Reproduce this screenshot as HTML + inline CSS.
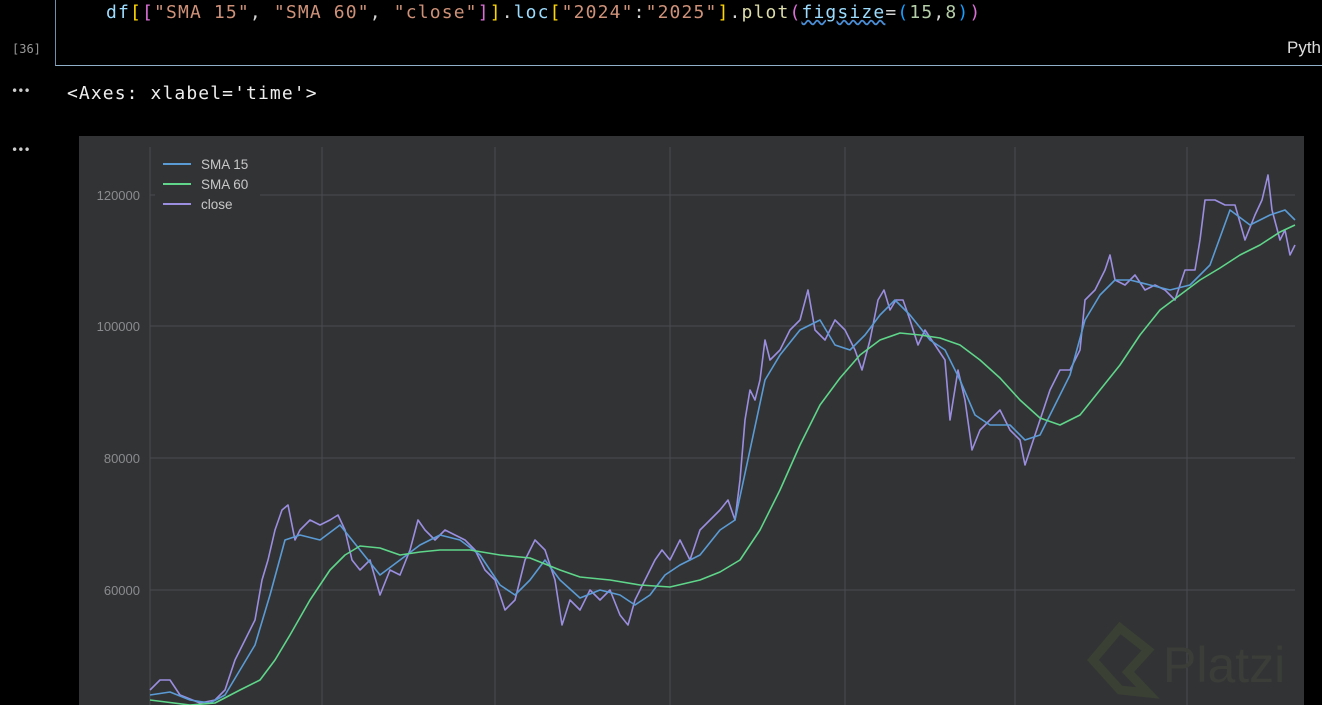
<!DOCTYPE html>
<html><head><style>
body{margin:0;width:1322px;height:705px;background:#000;overflow:hidden;position:relative;font-family:"DejaVu Sans Mono","Liberation Mono",monospace}
.a{position:absolute;white-space:pre}
</style></head><body>
<div class="a" style="left:55px;top:0;width:1267px;height:65px;border-left:1px solid #6f8fab;border-bottom:1px solid #8fb0c8"></div>
<div class="a" style="left:106px;top:2px;font-size:18px;letter-spacing:1.15px;color:#9cdcfe"><span style="color:#9cdcfe">df</span><span style="color:#ffd700">[</span><span style="color:#da70d6">[</span><span style="color:#ce9178">"SMA 15"</span><span style="color:#d4d4d4">, </span><span style="color:#ce9178">"SMA 60"</span><span style="color:#d4d4d4">, </span><span style="color:#ce9178">"close"</span><span style="color:#da70d6">]</span><span style="color:#ffd700">]</span><span style="color:#d4d4d4">.</span>loc<span style="color:#ffd700">[</span><span style="color:#ce9178">"2024"</span><span style="color:#d4d4d4">:</span><span style="color:#ce9178">"2025"</span><span style="color:#ffd700">]</span><span style="color:#d4d4d4">.</span><span style="color:#dcdcaa">plot</span><span style="color:#da70d6">(</span><span style="text-decoration:underline wavy #4a90d9">figsize</span><span style="color:#d4d4d4">=</span><span style="color:#179fff">(</span><span style="color:#b5cea8">15</span><span style="color:#d4d4d4">,</span><span style="color:#b5cea8">8</span><span style="color:#179fff">)</span><span style="color:#da70d6">)</span></div>
<div class="a" style="left:12px;top:42px;font-size:12px;color:#999">[36]</div>
<div class="a" style="left:1287px;top:38px;font-size:17px;color:#ddd;font-family:'Liberation Sans',sans-serif">Pyth</div>
<div class="a" style="left:11px;top:84px;font-size:12px;color:#ccc;letter-spacing:-1px">•••</div>
<div class="a" style="left:11px;top:143px;font-size:12px;color:#ccc;letter-spacing:-1px">•••</div>
<div class="a" style="left:67px;top:83px;font-size:18px;letter-spacing:1.1px;color:#eee">&lt;Axes: xlabel='time'&gt;</div>
<svg class="a" style="left:79px;top:136px" width="1225" height="569" viewBox="79 136 1225 569">
<rect x="79" y="136" width="1225" height="569" fill="#323335"/>
<g stroke="#4a4b4e" stroke-width="1">
<line x1="150" y1="147" x2="150" y2="705"/><line x1="322" y1="147" x2="322" y2="705"/><line x1="495" y1="147" x2="495" y2="705"/><line x1="670" y1="147" x2="670" y2="705"/><line x1="845" y1="147" x2="845" y2="705"/><line x1="1015" y1="147" x2="1015" y2="705"/><line x1="1187" y1="147" x2="1187" y2="705"/>
<line x1="150" y1="195" x2="1295" y2="195"/><line x1="150" y1="326" x2="1295" y2="326"/><line x1="150" y1="458" x2="1295" y2="458"/><line x1="150" y1="590" x2="1295" y2="590"/>
</g>
<g font-family="Liberation Sans,sans-serif" font-size="13" fill="#8a8b8e" text-anchor="end">
<text x="140" y="200">120000</text><text x="140" y="331">100000</text><text x="140" y="463">80000</text><text x="140" y="595">60000</text>
</g>
<g opacity="0.35" fill="none" stroke="#4a5a30" stroke-width="9"><path d="M1120 628 L1148 650 L1128 672 L1148 693 L1120 690 L1093 660 Z"/></g>
<text x="1163" y="682" font-family="Liberation Sans,sans-serif" font-size="50" fill="#3a3d38">Platzi</text>
<g fill="none" stroke-width="1.6" stroke-linejoin="round">
<polyline stroke="#9b8ee0" points="150,690 160,680 170,680 180,695 200,703 215,700 225,690 235,660 245,640 255,620 262,580 268,560 275,530 282,510 288,505 295,540 300,530 310,520 320,525 330,520 338,515 345,530 352,560 360,570 370,560 380,595 390,570 400,575 410,550 418,520 425,530 435,540 445,530 455,535 465,540 475,550 485,570 495,580 505,610 515,600 525,560 535,540 545,550 555,580 562,625 570,600 580,610 590,590 600,600 610,590 620,615 628,625 635,600 645,580 655,560 662,550 670,560 680,540 690,560 700,530 710,520 720,510 728,500 735,520 740,480 745,420 750,390 755,400 760,380 765,340 770,360 780,350 790,330 800,320 808,290 815,330 825,340 835,320 845,330 855,350 862,370 870,340 878,300 884,290 890,310 896,300 903,300 910,320 918,345 925,330 935,345 945,360 950,420 958,370 965,400 972,450 980,430 990,420 1000,410 1010,430 1020,440 1025,465 1030,450 1040,420 1050,390 1060,370 1070,370 1080,350 1085,300 1095,290 1105,270 1110,255 1115,280 1125,285 1135,275 1145,290 1155,285 1165,290 1175,300 1185,270 1195,270 1200,240 1205,200 1215,200 1225,205 1235,205 1245,240 1255,215 1262,200 1268,175 1272,210 1280,240 1285,230 1290,255 1295,245"/>
<polyline stroke="#5b9bd5" points="150,695 170,692 190,700 210,703 225,695 240,670 255,645 270,595 285,540 300,535 320,540 340,525 360,550 380,575 400,560 420,545 440,535 460,540 480,555 500,585 515,595 530,580 545,560 560,580 580,598 600,590 620,595 635,605 650,595 665,575 680,565 700,555 720,530 735,520 750,450 765,380 780,355 800,330 820,320 835,345 850,350 865,335 880,315 895,300 910,315 930,340 945,350 960,380 975,415 990,425 1010,425 1025,440 1040,435 1055,405 1070,375 1085,320 1100,295 1115,280 1130,280 1150,285 1170,290 1190,285 1210,265 1230,210 1250,225 1270,215 1285,210 1295,220"/>
<polyline stroke="#5fd68a" points="150,700 190,705 215,703 240,690 260,680 275,660 290,635 310,600 330,570 345,555 360,546 380,548 400,555 420,552 440,550 470,550 500,555 530,558 560,570 580,577 610,580 640,585 670,587 700,580 720,572 740,560 760,530 780,490 800,445 820,405 840,378 860,355 880,340 900,333 920,335 940,338 960,345 980,360 1000,378 1020,400 1040,418 1060,425 1080,415 1100,390 1120,365 1140,335 1160,310 1180,295 1200,280 1220,268 1240,255 1260,245 1280,232 1295,225"/>
</g>
<rect x="155" y="153" width="105" height="64" fill="#323335"/>
<g stroke-width="2"><line x1="163" y1="164" x2="191" y2="164" stroke="#5b9bd5"/><line x1="163" y1="184" x2="191" y2="184" stroke="#5fd68a"/><line x1="163" y1="204" x2="191" y2="204" stroke="#9b8ee0"/></g>
<g font-family="Liberation Sans,sans-serif" font-size="13.5" fill="#c8c8c8"><text x="201" y="169">SMA 15</text><text x="201" y="189">SMA 60</text><text x="201" y="209">close</text></g>
</svg>
</body></html>
